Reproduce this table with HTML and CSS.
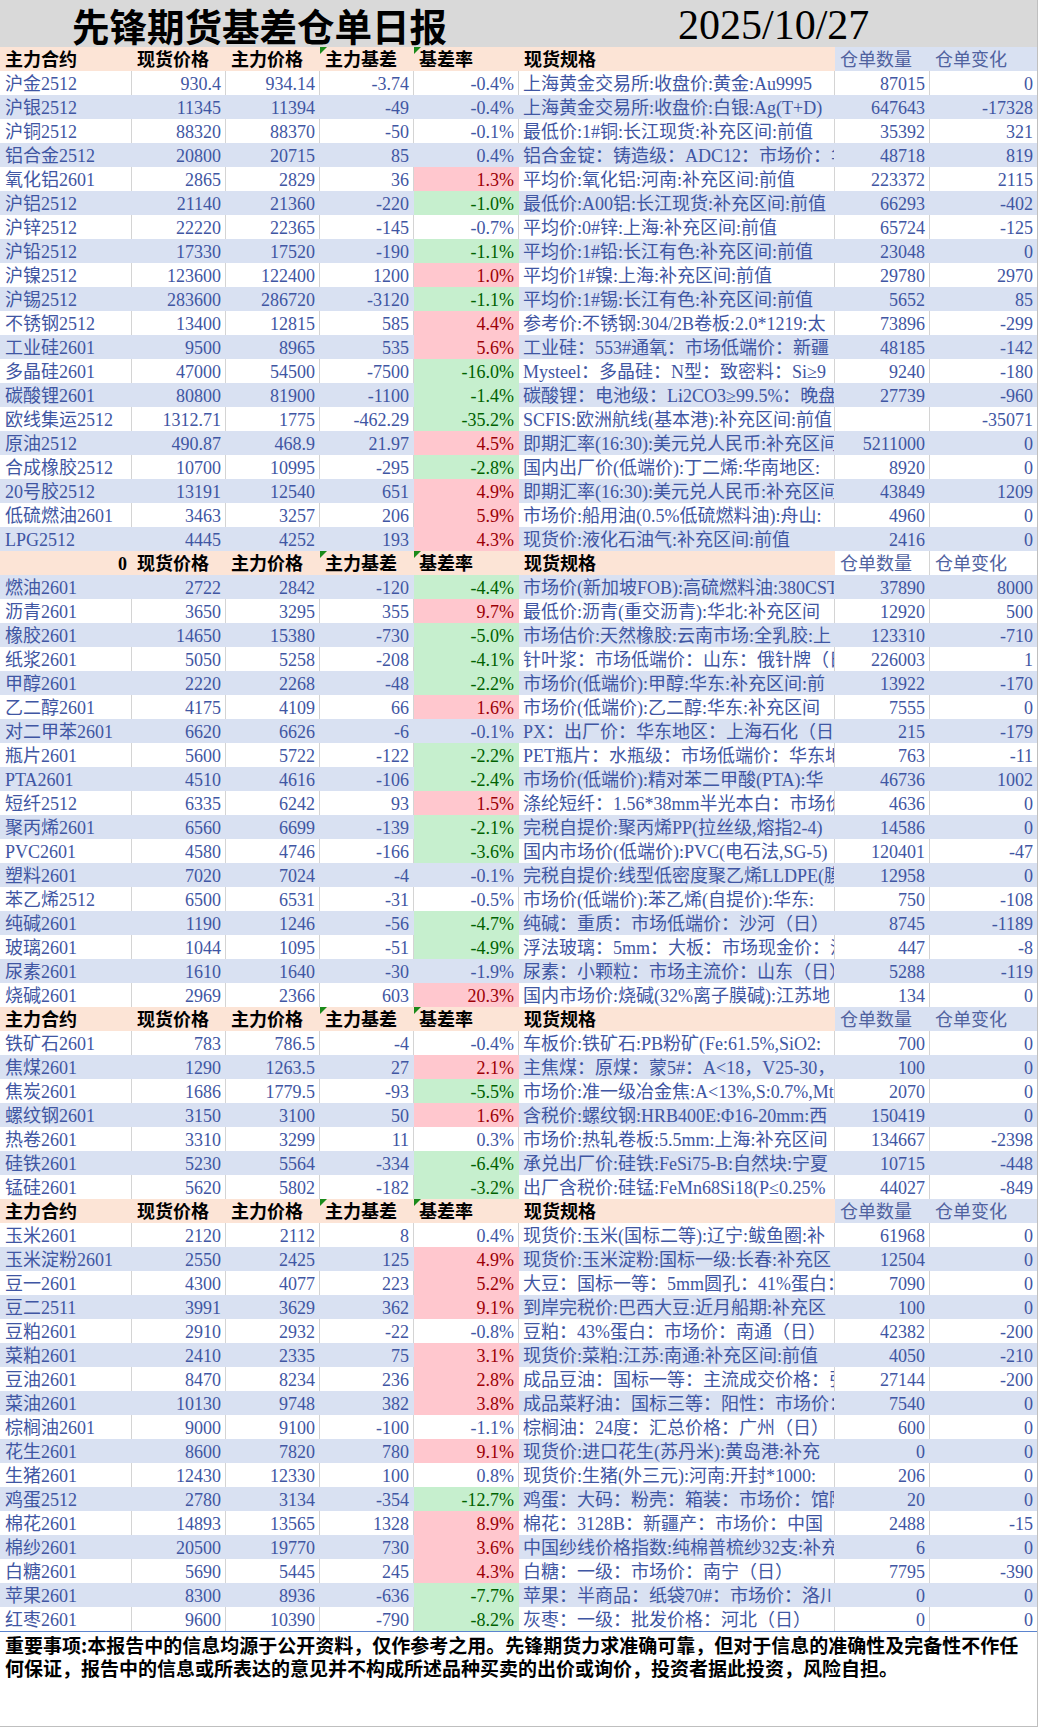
FILE: index.html
```html
<!DOCTYPE html>
<html lang="zh-CN">
<head>
<meta charset="utf-8">
<title>先锋期货基差仓单日报</title>
<link rel="stylesheet" href="styles.css">
</head>
<body>
<div class="page">
  <div class="title">
    <div class="title-text">先锋期货基差仓单日报</div>
    <div class="date">2025/10/27</div>
  </div>

  <div class="sheet">
    <div class="row hd"><div class="c">主力合约</div><div class="c">现货价格</div><div class="c">主力价格</div><div class="c tri">主力基差</div><div class="c tri">基差率</div><div class="c sp">现货规格</div><div class="c wq">仓单数量</div><div class="c wq">仓单变化</div></div>
    <div class="row"><div class="c nm">沪金2512</div><div class="c n">930.4</div><div class="c n">934.14</div><div class="c n">-3.74</div><div class="c n">-0.4%</div><div class="c sp">上海黄金交易所:收盘价:黄金:Au9995</div><div class="c n">87015</div><div class="c n">0</div></div>
    <div class="row b"><div class="c nm">沪银2512</div><div class="c n">11345</div><div class="c n">11394</div><div class="c n">-49</div><div class="c n">-0.4%</div><div class="c sp">上海黄金交易所:收盘价:白银:Ag(T+D)</div><div class="c n">647643</div><div class="c n">-17328</div></div>
    <div class="row"><div class="c nm">沪铜2512</div><div class="c n">88320</div><div class="c n">88370</div><div class="c n">-50</div><div class="c n">-0.1%</div><div class="c sp">最低价:1#铜:长江现货:补充区间:前值</div><div class="c n">35392</div><div class="c n">321</div></div>
    <div class="row b"><div class="c nm">铝合金2512</div><div class="c n">20800</div><div class="c n">20715</div><div class="c n">85</div><div class="c n">0.4%</div><div class="c sp">铝合金锭：铸造级：ADC12：市场价：华</div><div class="c n">48718</div><div class="c n">819</div></div>
    <div class="row"><div class="c nm">氧化铝2601</div><div class="c n">2865</div><div class="c n">2829</div><div class="c n">36</div><div class="c n r">1.3%</div><div class="c sp">平均价:氧化铝:河南:补充区间:前值</div><div class="c n">223372</div><div class="c n">2115</div></div>
    <div class="row b"><div class="c nm">沪铝2512</div><div class="c n">21140</div><div class="c n">21360</div><div class="c n">-220</div><div class="c n g">-1.0%</div><div class="c sp">最低价:A00铝:长江现货:补充区间:前值</div><div class="c n">66293</div><div class="c n">-402</div></div>
    <div class="row"><div class="c nm">沪锌2512</div><div class="c n">22220</div><div class="c n">22365</div><div class="c n">-145</div><div class="c n">-0.7%</div><div class="c sp">平均价:0#锌:上海:补充区间:前值</div><div class="c n">65724</div><div class="c n">-125</div></div>
    <div class="row b"><div class="c nm">沪铅2512</div><div class="c n">17330</div><div class="c n">17520</div><div class="c n">-190</div><div class="c n g">-1.1%</div><div class="c sp">平均价:1#铅:长江有色:补充区间:前值</div><div class="c n">23048</div><div class="c n">0</div></div>
    <div class="row"><div class="c nm">沪镍2512</div><div class="c n">123600</div><div class="c n">122400</div><div class="c n">1200</div><div class="c n r">1.0%</div><div class="c sp">平均价1#镍:上海:补充区间:前值</div><div class="c n">29780</div><div class="c n">2970</div></div>
    <div class="row b"><div class="c nm">沪锡2512</div><div class="c n">283600</div><div class="c n">286720</div><div class="c n">-3120</div><div class="c n g">-1.1%</div><div class="c sp">平均价:1#锡:长江有色:补充区间:前值</div><div class="c n">5652</div><div class="c n">85</div></div>
    <div class="row"><div class="c nm">不锈钢2512</div><div class="c n">13400</div><div class="c n">12815</div><div class="c n">585</div><div class="c n r">4.4%</div><div class="c sp">参考价:不锈钢:304/2B卷板:2.0*1219:太</div><div class="c n">73896</div><div class="c n">-299</div></div>
    <div class="row b"><div class="c nm">工业硅2601</div><div class="c n">9500</div><div class="c n">8965</div><div class="c n">535</div><div class="c n r">5.6%</div><div class="c sp">工业硅：553#通氧：市场低端价：新疆</div><div class="c n">48185</div><div class="c n">-142</div></div>
    <div class="row"><div class="c nm">多晶硅2601</div><div class="c n">47000</div><div class="c n">54500</div><div class="c n">-7500</div><div class="c n g">-16.0%</div><div class="c sp">Mysteel：多晶硅：N型：致密料：Si≥9</div><div class="c n">9240</div><div class="c n">-180</div></div>
    <div class="row b"><div class="c nm">碳酸锂2601</div><div class="c n">80800</div><div class="c n">81900</div><div class="c n">-1100</div><div class="c n g">-1.4%</div><div class="c sp">碳酸锂：电池级：Li2CO3≥99.5%：晚盘</div><div class="c n">27739</div><div class="c n">-960</div></div>
    <div class="row"><div class="c nm">欧线集运2512</div><div class="c n">1312.71</div><div class="c n">1775</div><div class="c n">-462.29</div><div class="c n g">-35.2%</div><div class="c sp">SCFIS:欧洲航线(基本港):补充区间:前值</div><div class="c n"></div><div class="c n">-35071</div></div>
    <div class="row b"><div class="c nm">原油2512</div><div class="c n">490.87</div><div class="c n">468.9</div><div class="c n">21.97</div><div class="c n r">4.5%</div><div class="c sp">即期汇率(16:30):美元兑人民币:补充区间</div><div class="c n">5211000</div><div class="c n">0</div></div>
    <div class="row"><div class="c nm">合成橡胶2512</div><div class="c n">10700</div><div class="c n">10995</div><div class="c n">-295</div><div class="c n g">-2.8%</div><div class="c sp">国内出厂价(低端价):丁二烯:华南地区:</div><div class="c n">8920</div><div class="c n">0</div></div>
    <div class="row b"><div class="c nm">20号胶2512</div><div class="c n">13191</div><div class="c n">12540</div><div class="c n">651</div><div class="c n r">4.9%</div><div class="c sp">即期汇率(16:30):美元兑人民币:补充区间</div><div class="c n">43849</div><div class="c n">1209</div></div>
    <div class="row"><div class="c nm">低硫燃油2601</div><div class="c n">3463</div><div class="c n">3257</div><div class="c n">206</div><div class="c n r">5.9%</div><div class="c sp">市场价:船用油(0.5%低硫燃料油):舟山:</div><div class="c n">4960</div><div class="c n">0</div></div>
    <div class="row b"><div class="c nm">LPG2512</div><div class="c n">4445</div><div class="c n">4252</div><div class="c n">193</div><div class="c n r">4.3%</div><div class="c sp">现货价:液化石油气:补充区间:前值</div><div class="c n">2416</div><div class="c n">0</div></div>

    <div class="row hd hd2"><div class="c n">0</div><div class="c">现货价格</div><div class="c">主力价格</div><div class="c tri">主力基差</div><div class="c tri">基差率</div><div class="c sp">现货规格</div><div class="c wq">仓单数量</div><div class="c wq">仓单变化</div></div>
    <div class="row b"><div class="c nm">燃油2601</div><div class="c n">2722</div><div class="c n">2842</div><div class="c n">-120</div><div class="c n g">-4.4%</div><div class="c sp">市场价(新加坡FOB):高硫燃料油:380CST</div><div class="c n">37890</div><div class="c n">8000</div></div>
    <div class="row"><div class="c nm">沥青2601</div><div class="c n">3650</div><div class="c n">3295</div><div class="c n">355</div><div class="c n r">9.7%</div><div class="c sp">最低价:沥青(重交沥青):华北:补充区间</div><div class="c n">12920</div><div class="c n">500</div></div>
    <div class="row b"><div class="c nm">橡胶2601</div><div class="c n">14650</div><div class="c n">15380</div><div class="c n">-730</div><div class="c n g">-5.0%</div><div class="c sp">市场估价:天然橡胶:云南市场:全乳胶:上</div><div class="c n">123310</div><div class="c n">-710</div></div>
    <div class="row"><div class="c nm">纸浆2601</div><div class="c n">5050</div><div class="c n">5258</div><div class="c n">-208</div><div class="c n g">-4.1%</div><div class="c sp">针叶浆：市场低端价：山东：俄针牌（日</div><div class="c n">226003</div><div class="c n">1</div></div>
    <div class="row b"><div class="c nm">甲醇2601</div><div class="c n">2220</div><div class="c n">2268</div><div class="c n">-48</div><div class="c n g">-2.2%</div><div class="c sp">市场价(低端价):甲醇:华东:补充区间:前</div><div class="c n">13922</div><div class="c n">-170</div></div>
    <div class="row"><div class="c nm">乙二醇2601</div><div class="c n">4175</div><div class="c n">4109</div><div class="c n">66</div><div class="c n r">1.6%</div><div class="c sp">市场价(低端价):乙二醇:华东:补充区间</div><div class="c n">7555</div><div class="c n">0</div></div>
    <div class="row b"><div class="c nm">对二甲苯2601</div><div class="c n">6620</div><div class="c n">6626</div><div class="c n">-6</div><div class="c n">-0.1%</div><div class="c sp">PX：出厂价：华东地区：上海石化（日）</div><div class="c n">215</div><div class="c n">-179</div></div>
    <div class="row"><div class="c nm">瓶片2601</div><div class="c n">5600</div><div class="c n">5722</div><div class="c n">-122</div><div class="c n g">-2.2%</div><div class="c sp">PET瓶片：水瓶级：市场低端价：华东地</div><div class="c n">763</div><div class="c n">-11</div></div>
    <div class="row b"><div class="c nm">PTA2601</div><div class="c n">4510</div><div class="c n">4616</div><div class="c n">-106</div><div class="c n g">-2.4%</div><div class="c sp">市场价(低端价):精对苯二甲酸(PTA):华</div><div class="c n">46736</div><div class="c n">1002</div></div>
    <div class="row"><div class="c nm">短纤2512</div><div class="c n">6335</div><div class="c n">6242</div><div class="c n">93</div><div class="c n r">1.5%</div><div class="c sp">涤纶短纤：1.56*38mm半光本白：市场价</div><div class="c n">4636</div><div class="c n">0</div></div>
    <div class="row b"><div class="c nm">聚丙烯2601</div><div class="c n">6560</div><div class="c n">6699</div><div class="c n">-139</div><div class="c n g">-2.1%</div><div class="c sp">完税自提价:聚丙烯PP(拉丝级,熔指2-4)</div><div class="c n">14586</div><div class="c n">0</div></div>
    <div class="row"><div class="c nm">PVC2601</div><div class="c n">4580</div><div class="c n">4746</div><div class="c n">-166</div><div class="c n g">-3.6%</div><div class="c sp">国内市场价(低端价):PVC(电石法,SG-5)</div><div class="c n">120401</div><div class="c n">-47</div></div>
    <div class="row b"><div class="c nm">塑料2601</div><div class="c n">7020</div><div class="c n">7024</div><div class="c n">-4</div><div class="c n">-0.1%</div><div class="c sp">完税自提价:线型低密度聚乙烯LLDPE(膜</div><div class="c n">12958</div><div class="c n">0</div></div>
    <div class="row"><div class="c nm">苯乙烯2512</div><div class="c n">6500</div><div class="c n">6531</div><div class="c n">-31</div><div class="c n">-0.5%</div><div class="c sp">市场价(低端价):苯乙烯(自提价):华东:</div><div class="c n">750</div><div class="c n">-108</div></div>
    <div class="row b"><div class="c nm">纯碱2601</div><div class="c n">1190</div><div class="c n">1246</div><div class="c n">-56</div><div class="c n g">-4.7%</div><div class="c sp">纯碱：重质：市场低端价：沙河（日）</div><div class="c n">8745</div><div class="c n">-1189</div></div>
    <div class="row"><div class="c nm">玻璃2601</div><div class="c n">1044</div><div class="c n">1095</div><div class="c n">-51</div><div class="c n g">-4.9%</div><div class="c sp">浮法玻璃：5mm：大板：市场现金价：沙</div><div class="c n">447</div><div class="c n">-8</div></div>
    <div class="row b"><div class="c nm">尿素2601</div><div class="c n">1610</div><div class="c n">1640</div><div class="c n">-30</div><div class="c n">-1.9%</div><div class="c sp">尿素：小颗粒：市场主流价：山东（日）</div><div class="c n">5288</div><div class="c n">-119</div></div>
    <div class="row"><div class="c nm">烧碱2601</div><div class="c n">2969</div><div class="c n">2366</div><div class="c n">603</div><div class="c n r">20.3%</div><div class="c sp">国内市场价:烧碱(32%离子膜碱):江苏地</div><div class="c n">134</div><div class="c n">0</div></div>

    <div class="row hd"><div class="c">主力合约</div><div class="c">现货价格</div><div class="c">主力价格</div><div class="c tri">主力基差</div><div class="c tri">基差率</div><div class="c sp">现货规格</div><div class="c wq">仓单数量</div><div class="c wq">仓单变化</div></div>
    <div class="row"><div class="c nm">铁矿石2601</div><div class="c n">783</div><div class="c n">786.5</div><div class="c n">-4</div><div class="c n">-0.4%</div><div class="c sp">车板价:铁矿石:PB粉矿(Fe:61.5%,SiO2:</div><div class="c n">700</div><div class="c n">0</div></div>
    <div class="row b"><div class="c nm">焦煤2601</div><div class="c n">1290</div><div class="c n">1263.5</div><div class="c n">27</div><div class="c n r">2.1%</div><div class="c sp">主焦煤：原煤：蒙5#：A&lt;18，V25-30，</div><div class="c n">100</div><div class="c n">0</div></div>
    <div class="row"><div class="c nm">焦炭2601</div><div class="c n">1686</div><div class="c n">1779.5</div><div class="c n">-93</div><div class="c n g">-5.5%</div><div class="c sp">市场价:准一级冶金焦:A&lt;13%,S:0.7%,Mt</div><div class="c n">2070</div><div class="c n">0</div></div>
    <div class="row b"><div class="c nm">螺纹钢2601</div><div class="c n">3150</div><div class="c n">3100</div><div class="c n">50</div><div class="c n r">1.6%</div><div class="c sp">含税价:螺纹钢:HRB400E:Φ16-20mm:西</div><div class="c n">150419</div><div class="c n">0</div></div>
    <div class="row"><div class="c nm">热卷2601</div><div class="c n">3310</div><div class="c n">3299</div><div class="c n">11</div><div class="c n">0.3%</div><div class="c sp">市场价:热轧卷板:5.5mm:上海:补充区间</div><div class="c n">134667</div><div class="c n">-2398</div></div>
    <div class="row b"><div class="c nm">硅铁2601</div><div class="c n">5230</div><div class="c n">5564</div><div class="c n">-334</div><div class="c n g">-6.4%</div><div class="c sp">承兑出厂价:硅铁:FeSi75-B:自然块:宁夏</div><div class="c n">10715</div><div class="c n">-448</div></div>
    <div class="row"><div class="c nm">锰硅2601</div><div class="c n">5620</div><div class="c n">5802</div><div class="c n">-182</div><div class="c n g">-3.2%</div><div class="c sp">出厂含税价:硅锰:FeMn68Si18(P≤0.25%</div><div class="c n">44027</div><div class="c n">-849</div></div>

    <div class="row hd"><div class="c">主力合约</div><div class="c">现货价格</div><div class="c">主力价格</div><div class="c tri">主力基差</div><div class="c tri">基差率</div><div class="c sp">现货规格</div><div class="c wq">仓单数量</div><div class="c wq">仓单变化</div></div>
    <div class="row"><div class="c nm">玉米2601</div><div class="c n">2120</div><div class="c n">2112</div><div class="c n">8</div><div class="c n">0.4%</div><div class="c sp">现货价:玉米(国标二等):辽宁:鲅鱼圈:补</div><div class="c n">61968</div><div class="c n">0</div></div>
    <div class="row b"><div class="c nm">玉米淀粉2601</div><div class="c n">2550</div><div class="c n">2425</div><div class="c n">125</div><div class="c n r">4.9%</div><div class="c sp">现货价:玉米淀粉:国标一级:长春:补充区</div><div class="c n">12504</div><div class="c n">0</div></div>
    <div class="row"><div class="c nm">豆一2601</div><div class="c n">4300</div><div class="c n">4077</div><div class="c n">223</div><div class="c n r">5.2%</div><div class="c sp">大豆：国标一等：5mm圆孔：41%蛋白：合</div><div class="c n">7090</div><div class="c n">0</div></div>
    <div class="row b"><div class="c nm">豆二2511</div><div class="c n">3991</div><div class="c n">3629</div><div class="c n">362</div><div class="c n r">9.1%</div><div class="c sp">到岸完税价:巴西大豆:近月船期:补充区</div><div class="c n">100</div><div class="c n">0</div></div>
    <div class="row"><div class="c nm">豆粕2601</div><div class="c n">2910</div><div class="c n">2932</div><div class="c n">-22</div><div class="c n">-0.8%</div><div class="c sp">豆粕：43%蛋白：市场价：南通（日）</div><div class="c n">42382</div><div class="c n">-200</div></div>
    <div class="row b"><div class="c nm">菜粕2601</div><div class="c n">2410</div><div class="c n">2335</div><div class="c n">75</div><div class="c n r">3.1%</div><div class="c sp">现货价:菜粕:江苏:南通:补充区间:前值</div><div class="c n">4050</div><div class="c n">-210</div></div>
    <div class="row"><div class="c nm">豆油2601</div><div class="c n">8470</div><div class="c n">8234</div><div class="c n">236</div><div class="c n r">2.8%</div><div class="c sp">成品豆油：国标一等：主流成交价格：张</div><div class="c n">27144</div><div class="c n">-200</div></div>
    <div class="row b"><div class="c nm">菜油2601</div><div class="c n">10130</div><div class="c n">9748</div><div class="c n">382</div><div class="c n r">3.8%</div><div class="c sp">成品菜籽油：国标三等：阳性：市场价：</div><div class="c n">7540</div><div class="c n">0</div></div>
    <div class="row"><div class="c nm">棕榈油2601</div><div class="c n">9000</div><div class="c n">9100</div><div class="c n">-100</div><div class="c n">-1.1%</div><div class="c sp">棕榈油：24度：汇总价格：广州（日）</div><div class="c n">600</div><div class="c n">0</div></div>
    <div class="row b"><div class="c nm">花生2601</div><div class="c n">8600</div><div class="c n">7820</div><div class="c n">780</div><div class="c n r">9.1%</div><div class="c sp">现货价:进口花生(苏丹米):黄岛港:补充</div><div class="c n">0</div><div class="c n">0</div></div>
    <div class="row"><div class="c nm">生猪2601</div><div class="c n">12430</div><div class="c n">12330</div><div class="c n">100</div><div class="c n">0.8%</div><div class="c sp">现货价:生猪(外三元):河南:开封*1000:</div><div class="c n">206</div><div class="c n">0</div></div>
    <div class="row b"><div class="c nm">鸡蛋2512</div><div class="c n">2780</div><div class="c n">3134</div><div class="c n">-354</div><div class="c n g">-12.7%</div><div class="c sp">鸡蛋：大码：粉壳：箱装：市场价：馆陶</div><div class="c n">20</div><div class="c n">0</div></div>
    <div class="row"><div class="c nm">棉花2601</div><div class="c n">14893</div><div class="c n">13565</div><div class="c n">1328</div><div class="c n r">8.9%</div><div class="c sp">棉花：3128B：新疆产：市场价：中国（</div><div class="c n">2488</div><div class="c n">-15</div></div>
    <div class="row b"><div class="c nm">棉纱2601</div><div class="c n">20500</div><div class="c n">19770</div><div class="c n">730</div><div class="c n r">3.6%</div><div class="c sp">中国纱线价格指数:纯棉普梳纱32支:补充</div><div class="c n">6</div><div class="c n">0</div></div>
    <div class="row"><div class="c nm">白糖2601</div><div class="c n">5690</div><div class="c n">5445</div><div class="c n">245</div><div class="c n r">4.3%</div><div class="c sp">白糖：一级：市场价：南宁（日）</div><div class="c n">7795</div><div class="c n">-390</div></div>
    <div class="row b"><div class="c nm">苹果2601</div><div class="c n">8300</div><div class="c n">8936</div><div class="c n">-636</div><div class="c n g">-7.7%</div><div class="c sp">苹果：半商品：纸袋70#：市场价：洛川</div><div class="c n">0</div><div class="c n">0</div></div>
    <div class="row"><div class="c nm">红枣2601</div><div class="c n">9600</div><div class="c n">10390</div><div class="c n">-790</div><div class="c n g">-8.2%</div><div class="c sp">灰枣：一级：批发价格：河北（日）</div><div class="c n">0</div><div class="c n">0</div></div>
  </div>

  <div class="foot">
    <p class="foot-text">重要事项:本报告中的信息均源于公开资料，仅作参考之用。先锋期货力求准确可靠，但对于信息的准确性及完备性不作任何保证，报告中的信息或所表达的意见并不构成所述品种买卖的出价或询价，投资者据此投资，风险自担。</p>
  </div>
</div>
</body>
</html>
```

FILE: styles.css
```css
* {
  box-sizing: border-box;
  margin: 0;
  padding: 0;
}

html, body {
  background: #ffffff;
}

body {
  width: 1038px;
  height: 1728px;
  font-family: "Liberation Serif", "Noto Sans CJK SC", serif;
}

.page {
  width: 1038px;
  height: 1727px;
  border-right: 1px solid #bfbfbf;
  border-bottom: 1px solid #bfbfbf;
}

/* ---------- title bar ---------- */
.title {
  height: 47px;
  background: #d9d9d9;
  display: flex;
  align-items: flex-start;
}

.title-text {
  font-family: "Noto Sans CJK SC", sans-serif;
  font-weight: 700;
  font-size: 37.5px;
  line-height: 47px;
  padding-top: 1px;
  padding-left: 72px;
  color: #000;
  white-space: nowrap;
}

.date {
  font-family: "Liberation Serif", serif;
  font-size: 42px;
  line-height: 47px;
  padding-top: 2px;
  margin-left: 231px;
  color: #000;
  white-space: nowrap;
}

/* ---------- sheet ---------- */
.sheet {
  width: 1037px;
}

.row {
  display: grid;
  grid-template-columns: 132px 94px 94px 94px 105px 316px 95px 107px;
  height: 24px;
}

.c {
  height: 24px;
  overflow: hidden;
  white-space: nowrap;
  font-size: 18px;
  line-height: 27px;
  padding: 0 4px;
  color: #3f56a3;
  background: #ffffff;
  border-right: 1px solid #d4d4d4;
}

.c:last-child {
  border-right: none;
}

.nm {
  padding-left: 5px;
}

.n {
  text-align: right;
}

.sp {
  padding-left: 4px;
  padding-right: 0;
}

.b .c {
  background: #d9e1f2;
  border-right-color: #d9e1f2;
}

.c.r {
  background: #ffc7ce;
  color: #9c0006;
  border-right-color: #ffc7ce;
}

.c.g {
  background: #c6efce;
  color: #006100;
  border-right-color: #c6efce;
}

/* ---------- header rows ---------- */
.hd .c {
  background: #fce4d6;
  border-right-color: #fce4d6;
  color: #000;
  font-weight: 700;
  padding-left: 5px;
}

.hd .c.n {
  padding-right: 4px;
}

.hd .c.wq {
  background: #d9e1f2;
  border-right-color: #d9e1f2;
  color: #50629f;
  font-weight: 400;
}

.hd2 .c.wq {
  background: #ffffff;
  border-right-color: #d4d4d4;
}

.hd2 .c.wq:last-child {
  border-right: none;
}

.tri {
  position: relative;
}

.tri::before {
  content: "";
  position: absolute;
  left: 0;
  top: 0;
  border-top: 7px solid #1a8a1a;
  border-right: 7px solid transparent;
}

/* ---------- footer ---------- */
.foot {
  border-top: 1px solid #5b84cf;
  padding: 1px 0 0 5px;
}

.foot-text {
  width: 1024px;
  font-family: "Noto Sans CJK SC", sans-serif;
  font-weight: 700;
  font-size: 19px;
  line-height: 23px;
  color: #000;
}
```
